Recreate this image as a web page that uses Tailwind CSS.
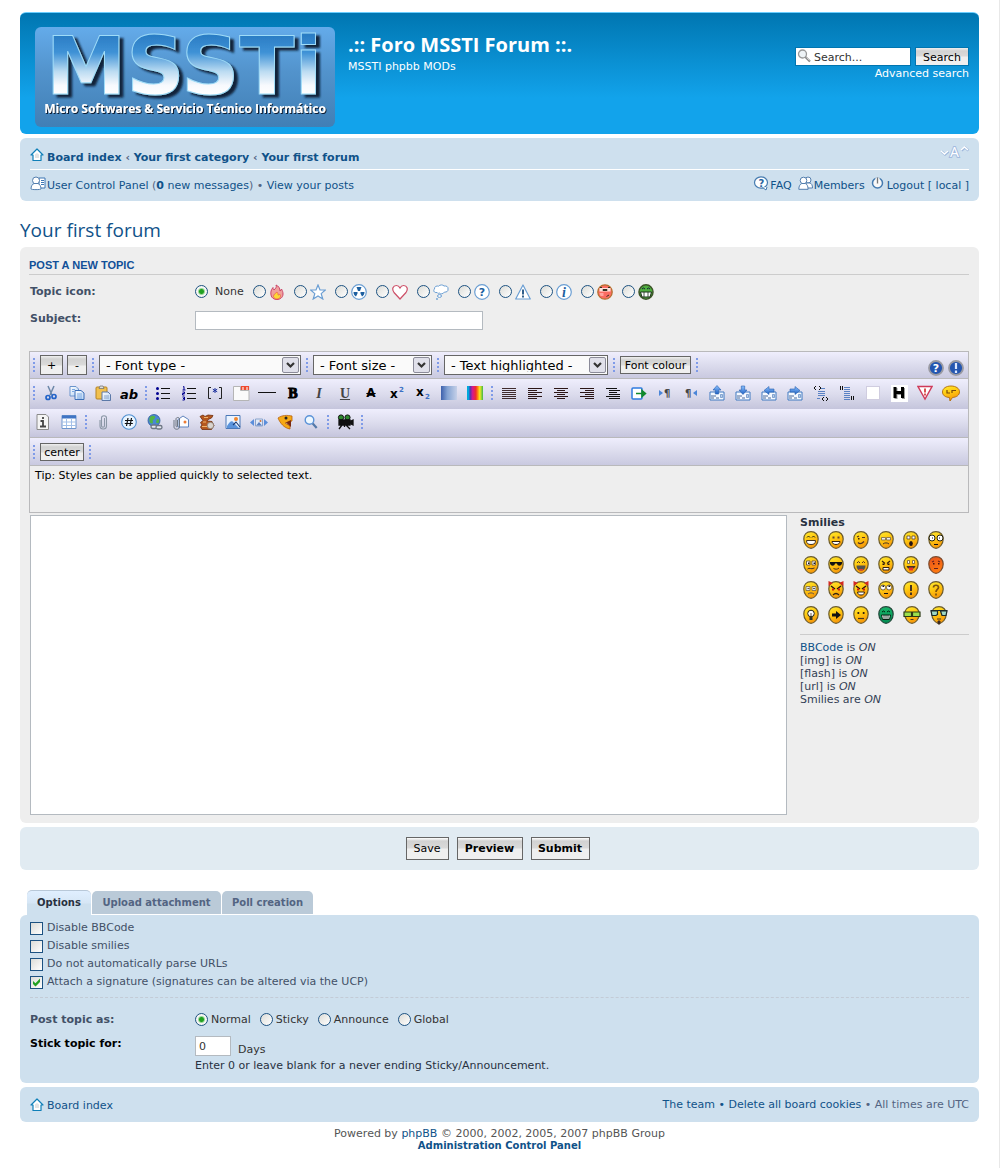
<!DOCTYPE html>
<html lang="en">
<head>
<meta charset="utf-8">
<title>Your first forum - Post a new topic</title>
<script src="https://cdn.jsdelivr.net/npm/@tailwindcss/browser@4"></script>
</head>
<body class="bg-white font-['Verdana','DejaVu_Sans',sans-serif] text-[11px] leading-[13px] text-[#536482]">

<svg class="absolute size-0" aria-hidden="true">
  <defs>
    <linearGradient id="gFace" x1="0" y1="0" x2=".4" y2="1"><stop offset="0" stop-color="#ffee33"/><stop offset=".5" stop-color="#ffc911"/><stop offset="1" stop-color="#f79a0a"/></linearGradient>
    <linearGradient id="gRed" x1="0" y1="0" x2=".4" y2="1"><stop offset="0" stop-color="#e8501c"/><stop offset="1" stop-color="#ff7a10"/></linearGradient>
    <linearGradient id="gGreen" x1="0" y1="0" x2="0" y2="1"><stop offset="0" stop-color="#19b56a"/><stop offset="1" stop-color="#008a50"/></linearGradient>
    <linearGradient id="gPage" x1="0" y1="0" x2="1" y2="1"><stop offset="0" stop-color="#fff"/><stop offset="1" stop-color="#b5d2f3"/></linearGradient>
    <linearGradient id="gBlue" x1="0" y1="0" x2="0" y2="1"><stop offset="0" stop-color="#8cc1ff"/><stop offset="1" stop-color="#1f62c4"/></linearGradient>
  </defs>
  <symbol id="face" viewBox="0 0 16 18"><path d="M8 .7c4.400 0 7.200 3 7.200 7.400 0 4.800-3.600 9.200-7.200 9.200S.8 12.900.8 8.100C.8 3.700 3.600.7 8 .7z" fill="url(#gFace)" stroke="#6b5a2c" stroke-width="1.200"/></symbol>
  <symbol id="home" viewBox="0 0 14 14"><path d="M7 1 1 7h2v5.500h8V7h2z" fill="#fff" stroke="#0f7fb8" stroke-width="1.200" stroke-linejoin="round"/><path d="M5 6.500 7 5l2 1.500V10H5z" fill="#e3e3e3"/></symbol>
  <symbol id="mover" viewBox="0 0 16 16"><path d="M1 7h14v8H1z" fill="#f5f9ff" stroke="#3f78c0"/><path d="M2 11h5M2 13h3M7 13h3" stroke="#4a6b9b"/><path d="M11.500 9.500h2v3h-2z" fill="#b7cdea" stroke="#4a78b8" stroke-width=".6"/></symbol>
</svg>

<div class="min-h-[1168px] border-r border-[#e8e8e8] px-5 pt-3 pb-4">

  <!-- Header -->
  <header class="flex items-start rounded-[6px] border-t border-[#6aceff] bg-[linear-gradient(#0076b1,#12a3eb_85px)] px-[10px] pt-[14px] pb-[6px] text-white">
    <a href="#" class="ml-[5px] shrink-0" aria-label="MSSTI home">
      <svg class="overflow-visible" width="300" height="101" viewBox="0 0 300 101">
        <defs>
          <linearGradient id="lgBg" x1="0" y1="0" x2="0" y2="1"><stop offset="0" stop-color="#64abea"/><stop offset=".45" stop-color="#5293cc"/><stop offset="1" stop-color="#417fb5"/></linearGradient>
          <linearGradient id="lgTx" gradientUnits="userSpaceOnUse" x1="0" y1="8" x2="0" y2="67"><stop offset="0" stop-color="#2a7cc4"/><stop offset=".3" stop-color="#3f92d6"/><stop offset=".62" stop-color="#bcdcf2"/><stop offset=".85" stop-color="#f7f9fd"/><stop offset="1" stop-color="#fff"/></linearGradient>
          <filter id="lgSh" x="-5%" y="-10%" width="112%" height="125%"><feDropShadow dx="4" dy="3" stdDeviation="1" flood-color="#0a1c30" flood-opacity=".95"/></filter>
          <filter id="lgSh2" x="-5%" y="-10%" width="112%" height="130%"><feDropShadow dx="1" dy="1" stdDeviation=".7" flood-color="#0a1c30"/></filter>
        </defs>
        <rect width="300" height="100" rx="6" fill="url(#lgBg)"/>
        <text x="149" y="67" text-anchor="middle" font-family="DejaVu Sans, sans-serif" font-weight="700" font-size="81" fill="url(#lgTx)" stroke="#9fdcf8" stroke-width="1" filter="url(#lgSh)">MSSTi</text>
        <text x="150" y="86" text-anchor="middle" font-family="Open Sans, sans-serif" font-weight="700" font-size="12" fill="#fff" filter="url(#lgSh2)">Micro Softwares &amp; Servicio Técnico Informático</text>
      </svg>
    </a>
    <div class="ml-[13px] pt-[7px]">
      <h1 class="font-['Trebuchet_MS','Open_Sans',sans-serif] text-[20px] leading-[22px] font-bold">.:: Foro MSSTI Forum ::.</h1>
      <p class="mt-1">MSSTI phpbb MODs</p>
    </div>
    <form class="ml-auto pt-[20px] text-right" onsubmit="return false">
      <div class="flex gap-[4px]">
        <div class="relative">
          <input type="text" value="Search..." aria-label="Search" class="block h-[19px] w-[116px] border border-[#0075b0] bg-white pt-px pl-[18px] text-[11px] text-[#333] outline-none">
          <svg class="absolute top-[2px] left-[2px]" width="14" height="14" viewBox="0 0 14 14"><circle cx="5.500" cy="5" r="4" fill="#eef3f6" stroke="#999" stroke-width="1.300"/><path d="M8.500 8 13 12.500" stroke="#888" stroke-width="2.200"/><path d="M9.500 8.500 12.500 11.500" stroke="#ddd" stroke-width=".8"/></svg>
        </div>
        <button class="h-[19px] w-[54px] border border-[#0075b0] bg-[linear-gradient(#efefef,#d2d2d2_3px,#d9d9d9_8px,#efefef_9px)] pt-px text-[11px] leading-[13px] text-black">Search</button>
      </div>
      <a href="#" class="block leading-[15px]">Advanced search</a>
    </form>
  </header>

  <!-- Breadcrumbs and user links -->
  <nav class="mt-1 rounded-[6px] bg-[#cee0ee] px-[10px] text-[#105289]">
    <div class="flex h-[32px] items-start border-b border-white pt-[13px]">
      <svg class="-mt-[3px] mr-[3px]" width="14" height="14"><use href="#home"/></svg>
      <p class="font-bold"><a href="#">Board index</a> <span class="text-[#536482]">‹</span> <a href="#">Your first category</a> <span class="text-[#536482]">‹</span> <a href="#">Your first forum</a></p>
      <a href="#" class="ml-auto -mt-[7px]" aria-label="Change font size">
        <svg class="overflow-visible" width="29" height="16" viewBox="0 0 29 16"><g fill="none" stroke="#9fb8dc" stroke-width="2.400"><path d="m1.500 7.500 3.500 3 3.500-3M21.500 6.500l3.500-3 3.500 3"/></g><g fill="none" stroke="#fff" stroke-width="1.400"><path d="m1 7 3.500 3L8 7M21 6l3.500-3L28 6"/></g><text x="10" y="13" font-family="Open Sans, sans-serif" font-size="14" fill="#fff" stroke="#a3bbdf" stroke-width="2" paint-order="stroke">A</text></svg>
      </a>
    </div>
    <div class="flex h-[31px] items-start pt-[9px]">
      <svg class="-mt-[3px] mr-px" width="16" height="15" viewBox="0 0 16 15"><path d="M9 2h6v10H9z" fill="#fff" stroke="#3d76b5"/><path d="M11 4.500h3M11 6.500h3M11 8.500h3" stroke="#3d76b5"/><circle cx="6" cy="4.500" r="3.500" fill="#fff" stroke="#547fae"/><path d="M1 13c0-3 1.500-5 3-5.500h4c1.500.5 3 2.500 3 5.500 0 .8-10 .8-10 0z" fill="#fff" stroke="#547fae"/></svg>
      <p><a href="#">User Control Panel</a> <span class="text-[#536482]">(</span><a href="#"><b>0</b> new messages</a><span class="text-[#536482]">) •</span> <a href="#">View your posts</a></p>
      <ul class="ml-auto flex gap-[6px]">
        <li class="flex"><svg class="-mt-[3px] mr-px" width="16" height="15" viewBox="0 0 16 15"><ellipse cx="8" cy="6.500" rx="6.500" ry="5.700" fill="#fff" stroke="#457bb0" stroke-width="1.200"/><path d="M9.500 11.500 13 14l1-3" fill="#fff" stroke="#457bb0"/><text x="5.500" y="10.500" font-family="DejaVu Sans, sans-serif" font-size="10" font-weight="700" fill="#2b659f">?</text></svg><a href="#">FAQ</a></li>
        <li class="flex"><svg class="-mt-[3px] mr-px" width="15" height="15" viewBox="0 0 15 15"><g fill="#fff" stroke="#547fae"><circle cx="10" cy="4" r="3"/><path d="M7 12c0-3 1-4.500 2-5h3c1.500.5 2.500 2 2.500 5z"/><circle cx="5.500" cy="4.500" r="3.300"/><path d="M.8 13.300c0-3.500 1.500-5.300 3-5.800h3.500c1.500.5 2.800 2.300 2.800 5.800z"/></g></svg><a href="#">Members</a></li>
        <li class="flex"><svg class="-mt-[3px] mr-[3px]" width="13" height="14" viewBox="0 0 13 14"><circle cx="6.500" cy="7" r="5" fill="#f8f8f8" stroke="#457bb0" stroke-width="1.500"/><path d="M6.500 1.500V7" stroke="#fff" stroke-width="4"/><path d="M6.500 1.500V7.500" stroke="#777" stroke-width="1.400"/></svg><a href="#">Logout [ local ]</a></li>
      </ul>
    </div>
  </nav>

  <h2 class="mt-[17px] font-['Trebuchet_MS','Open_Sans',sans-serif] text-[19px] leading-[24px] text-[#105289]">Your first forum</h2>

  <form onsubmit="return false">
  <!-- Message editor -->
  <section class="mt-[5px] rounded-[6px] bg-[#eee] px-[9px] pt-[12px] pb-[8px]">
    <h3 class="mr-px border-b border-[#ccc] pb-[2px] font-['Arial','Liberation_Sans',sans-serif] text-[11px] font-bold text-[#115098] uppercase">Post a new topic</h3>

    <div class="mt-[7px] flex h-[18px] items-center pl-px">
      <span class="w-[165px] font-bold text-[#425067]">Topic icon:</span>
      <div class="flex items-center gap-[8px] text-[#333] [&_input]:size-[13px] [&_input]:appearance-none [&_input]:rounded-full [&_input]:border [&_input]:border-[#1d5281] [&_input]:bg-[linear-gradient(135deg,#dcdcd7,#fff)] [&_input:checked]:bg-[radial-gradient(circle,#21a121_0_2px,#9bd79b_3px,#f6f6f4_4px)] [&_label]:flex [&_label]:items-center [&_label]:gap-[4px] [&_svg]:-ml-px [&_svg]:mt-[2px] [&_svg]:mr-px">
        <label class="min-w-[50px]"><input type="radio" name="icon" checked><span class="ml-[3px]">None</span></label>
        <label><input type="radio" name="icon" aria-label="Fire"><svg width="16" height="16" viewBox="0 0 16 16"><path d="M7 1c1 2-.5 3.500-2 5C4 5 4 4.500 4 3.500 2 6 1.500 8 2 11c.5 3 3 4.500 6 4.500s6-2 6-5.500c0-2-.5-3-1.500-5-.3 1-.7 1.500-1.500 2C11 4 9.500 2 7 1z" fill="#f0a09c" stroke="#cc4468"/><path d="M8 8c-1.500 1.500-3.500 2-3.500 4.500C5 14.500 6.500 15 8 15s3.500-1 3.500-3c0-1-.5-1.500-1-2-.5 1-1 1-1.500 1 0-1 0-2-1-3z" fill="#fdd835" stroke="#e8604a" stroke-width=".7"/></svg></label>
        <label><input type="radio" name="icon" aria-label="Star"><svg width="16" height="16" viewBox="0 0 16 16"><path d="m8 1 2 5h5.400l-4.200 3.600L12.800 15 8 12l-4.800 3 1.600-5.400L.6 6H6z" fill="#fff" stroke="#6a9ed3" stroke-width="1.200"/></svg></label>
        <label><input type="radio" name="icon" aria-label="Radioactive"><svg width="16" height="16" viewBox="0 0 16 16"><circle cx="8" cy="8" r="7.300" fill="#fff" stroke="#6a9ed3" stroke-width="1.200"/><path d="M5.500 3h5l-1.500 4H7zM2.500 8h4v1.500L5 12.500C3.500 12 2.500 10 2.500 8zM13.500 8h-4v1.500l1.500 3c1.500-.5 2.500-2.500 2.500-4.500z" fill="#1d5f9f"/></svg></label>
        <label><input type="radio" name="icon" aria-label="Heart"><svg width="16" height="16" viewBox="0 0 16 16"><path d="M8 15 2 8.500C-.5 5 1 1.500 4.300 1.500 6 1.500 7.500 3 8 4c.5-1 2-2.500 3.700-2.500C15 1.500 16.500 5 14 8.500z" fill="#fff" stroke="#cd5068" stroke-width="1.200"/></svg></label>
        <label><input type="radio" name="icon" aria-label="Thinking"><svg width="16" height="16" viewBox="0 0 16 16"><path d="M4 8.500C1 9 0 6.500 1.500 5 1 2.500 4 1.500 5.500 2.200 7 .5 10 .6 11 2c2.500-.5 4.500 1 4 3 .5 2-1.500 3.500-3.500 3C10.500 10 7 10.500 6.300 9 5.500 9.600 4.500 9.300 4 8.500z" fill="#fff" stroke="#6a9ed3"/><ellipse cx="6.500" cy="12" rx="2" ry="1.400" fill="#fff" stroke="#6a9ed3"/><circle cx="4" cy="15" r=".9" fill="#6a9ed3"/></svg></label>
        <label><input type="radio" name="icon" aria-label="Question"><svg width="16" height="16" viewBox="0 0 16 16"><circle cx="8" cy="8" r="7.300" fill="#fff" stroke="#6a9ed3" stroke-width="1.200"/><text x="8" y="12" text-anchor="middle" font-family="DejaVu Sans, sans-serif" font-weight="700" font-size="11" fill="#1d5f9f">?</text></svg></label>
        <label><input type="radio" name="icon" aria-label="Alert"><svg width="16" height="16" viewBox="0 0 16 16"><path d="M8 1 15.300 15H.7z" fill="#fff" stroke="#6a9ed3" stroke-width="1.200" stroke-linejoin="round"/><path d="M8 5.500v5M8 11.500v2" stroke="#1d4f7f" stroke-width="1.800"/></svg></label>
        <label><input type="radio" name="icon" aria-label="Info"><svg width="16" height="16" viewBox="0 0 16 16"><circle cx="8" cy="8" r="7.300" fill="#fff" stroke="#6a9ed3" stroke-width="1.200"/><text x="8" y="12.500" text-anchor="middle" font-family="Liberation Serif, serif" font-weight="700" font-style="italic" font-size="14" fill="#1d5f9f">i</text></svg></label>
        <label><input type="radio" name="icon" aria-label="Razz"><svg width="16" height="16" viewBox="0 0 16 16"><circle cx="8" cy="8" r="7.200" fill="#fb6c62" stroke="#b5702f" stroke-width="1.300"/><path d="M2.500 4h11v3.500h-11z" fill="#ffe2de"/><path d="M3 3.500h2M11 3.500h2M6 5.500h4v1H6zM9.500 12.500 12 11" stroke="#332" stroke-width="1" fill="#332"/><path d="M2.500 9h4v3h-3z" fill="#ffa5a0"/></svg></label>
        <label><input type="radio" name="icon" aria-label="Mr. Green"><svg width="16" height="16" viewBox="0 0 16 16"><ellipse cx="8" cy="8" rx="7" ry="7.200" fill="#4fae3f" stroke="#3c5428" stroke-width="1.500"/><path d="M4 5l1.500-1L7 5M9 5l1.500-1L12 5" stroke="#123" fill="none"/><path d="M2.500 8h11L12 13H4z" fill="#fff" stroke="#1d331a"/><path d="M6 8v5M10 8v5" stroke="#1d331a" stroke-width=".8"/></svg></label>
      </div>
    </div>

    <div class="mt-[11px] flex items-start pl-px">
      <label for="subject" class="w-[165px] pt-px font-bold text-[#425067]">Subject:</label>
      <input id="subject" type="text" class="h-[19px] w-[288px] border border-[#b4bac0] bg-white px-1 text-[#333] outline-none">
    </div>

    <!-- Formatting toolbars -->
    <div class="mt-[21px] mr-px border border-[#b9b9bb] text-black">
      <div class="flex h-[27px] items-center gap-[2px] border-b border-[#b9b9bb] bg-[linear-gradient(#efeefd,#dcdced_50%,#c9c9e0)]">
        <span class="mx-[3px] h-[14px] w-[2px] shrink-0 bg-[repeating-linear-gradient(#7f9be8_0_2px,transparent_2px_4px)]"></span>
        <button type="button" class="h-[20px] w-[23px] border border-[#666] bg-[linear-gradient(#efefef,#d2d2d2_3px,#dadada_9px,#efefef_10px)]">+</button>
        <button type="button" class="ml-[2px] h-[20px] w-[20px] border border-[#666] bg-[linear-gradient(#efefef,#d2d2d2_3px,#dadada_9px,#efefef_10px)]">-</button>
        <span class="mx-[3px] h-[14px] w-[2px] shrink-0 bg-[repeating-linear-gradient(#7f9be8_0_2px,transparent_2px_4px)]"></span>
        <div class="relative w-[202px]"><select aria-label="Font type" class="block h-[20px] w-full appearance-none border border-[#666] bg-[#fafafa] pl-[6px] text-[13px] outline-none"><option>- Font type -</option></select><svg class="pointer-events-none absolute top-[2px] right-[2px]" width="17" height="16" viewBox="0 0 17 16"><rect x=".5" y=".5" width="16" height="15" rx="1.500" fill="#e0e0ea" stroke="#8b8b99"/><path d="m5 6 3.500 3.500L12 6" fill="none" stroke="#333" stroke-width="2.200"/></svg></div>
        <span class="mx-[3px] h-[14px] w-[2px] shrink-0 bg-[repeating-linear-gradient(#7f9be8_0_2px,transparent_2px_4px)]"></span>
        <div class="relative w-[119px]"><select aria-label="Font size" class="block h-[20px] w-full appearance-none border border-[#666] bg-[#fafafa] pl-[6px] text-[13px] outline-none"><option>- Font size -</option></select><svg class="pointer-events-none absolute top-[2px] right-[2px]" width="17" height="16" viewBox="0 0 17 16"><rect x=".5" y=".5" width="16" height="15" rx="1.500" fill="#e0e0ea" stroke="#8b8b99"/><path d="m5 6 3.500 3.500L12 6" fill="none" stroke="#333" stroke-width="2.200"/></svg></div>
        <span class="mx-[3px] h-[14px] w-[2px] shrink-0 bg-[repeating-linear-gradient(#7f9be8_0_2px,transparent_2px_4px)]"></span>
        <div class="relative w-[164px]"><select aria-label="Text highlighted" class="block h-[20px] w-full appearance-none border border-[#666] bg-[#fafafa] pl-[6px] text-[13px] outline-none"><option>- Text highlighted -</option></select><svg class="pointer-events-none absolute top-[2px] right-[2px]" width="17" height="16" viewBox="0 0 17 16"><rect x=".5" y=".5" width="16" height="15" rx="1.500" fill="#e0e0ea" stroke="#8b8b99"/><path d="m5 6 3.500 3.500L12 6" fill="none" stroke="#333" stroke-width="2.200"/></svg></div>
        <span class="mx-[3px] h-[14px] w-[2px] shrink-0 bg-[repeating-linear-gradient(#7f9be8_0_2px,transparent_2px_4px)]"></span>
        <button type="button" class="h-[18px] w-[71px] border border-[#666] bg-[linear-gradient(#efefef,#d2d2d2_3px,#dadada_8px,#efefef_9px)] whitespace-nowrap">Font colour</button>
        <span class="mx-[3px] h-[14px] w-[2px] shrink-0 bg-[repeating-linear-gradient(#7f9be8_0_2px,transparent_2px_4px)]"></span>
        <div class="mr-[4px] ml-auto flex gap-[4px] pt-[5px]">
          <button type="button" aria-label="Help"><svg width="16" height="16" viewBox="0 0 16 16"><circle cx="8" cy="8" r="7" fill="#2456b0" stroke="#9a9aa2" stroke-width="1.800"/><text x="8" y="12" text-anchor="middle" font-family="DejaVu Sans, sans-serif" font-weight="700" font-size="11" fill="#fff">?</text></svg></button>
          <button type="button" aria-label="About"><svg width="16" height="16" viewBox="0 0 16 16"><circle cx="8" cy="8" r="7" fill="#2456b0" stroke="#9a9aa2" stroke-width="1.800"/><path d="M8 3v6M8 10.500v2.500" stroke="#dce8ff" stroke-width="2.200"/></svg></button>
        </div>
      </div>

      <div class="flex h-[30px] items-center bg-[linear-gradient(#efeefd,#dcdced_50%,#c5c5dc)] pb-[2px] [&>button]:grid [&>button]:h-full [&>button]:w-[26px] [&>button]:shrink-0 [&>button]:place-items-center">
        <span class="mx-[3px] h-[14px] w-[2px] shrink-0 bg-[repeating-linear-gradient(#7f9be8_0_2px,transparent_2px_4px)]"></span>
        <button type="button" aria-label="Cut"><svg width="16" height="16" viewBox="0 0 16 16"><path d="M5 1l4 9M11 1 7 10" stroke="#6c87a8" stroke-width="1.500"/><circle cx="5" cy="12.500" r="2" fill="none" stroke="#2464c8" stroke-width="1.700"/><circle cx="11" cy="11.500" r="2" fill="none" stroke="#2464c8" stroke-width="1.700"/></svg></button>
        <button type="button" aria-label="Copy"><svg width="16" height="16" viewBox="0 0 16 16"><path d="M1 1.500h6l2.500 2.500V11H1z" fill="url(#gPage)" stroke="#6a94cc"/><path d="M6 5.500h6L15 8v6.500H6z" fill="url(#gPage)" stroke="#3c6fb8"/><path d="M8 9h5M8 11h5M8 13h5M3 4.500h3M3 6.500h2" stroke="#6fa0e0" stroke-width=".9"/></svg></button>
        <button type="button" aria-label="Paste"><svg width="16" height="16" viewBox="0 0 16 16"><rect x="1" y="2" width="11" height="12" rx="1" fill="#f1c04e" stroke="#b58322"/><path d="M4 3.500h5L8 1H5z" fill="#ddd" stroke="#6b6b6b" stroke-width=".7"/><path d="M7 7h6l2.500 2.500v6H7z" fill="url(#gPage)" stroke="#5c79a8"/><path d="M9 11h5M9 13h5" stroke="#7a94bb" stroke-width=".8"/></svg></button>
        <button type="button" aria-label="Clear format"><svg width="18" height="16" viewBox="0 0 18 16"><text x="0" y="14" font-family="DejaVu Sans, sans-serif" font-weight="700" font-style="italic" font-size="13" fill="#000">ab</text></svg></button>
        <span class="mx-[3px] h-[14px] w-[2px] shrink-0 bg-[repeating-linear-gradient(#7f9be8_0_2px,transparent_2px_4px)]"></span>
        <button type="button" aria-label="Bulleted list"><svg width="16" height="16" viewBox="0 0 16 16"><path d="M6 3.500h9M6 8.500h9M6 13.500h9" stroke="#111"/><g fill="#000090"><circle cx="2.500" cy="3.500" r="1.500"/><circle cx="2.500" cy="8.500" r="1.500"/><circle cx="2.500" cy="13.500" r="1.500"/></g></svg></button>
        <button type="button" aria-label="Numbered list"><svg width="16" height="16" viewBox="0 0 16 16"><path d="M6 3.500h9M6 8.500h9M6 13.500h9" stroke="#111"/><path d="M2 2l1-.5V5M1.500 5h3M1.500 7h2v1.500h-2V10h2M1.500 12h2v3h-2M2 13.500h1.500" stroke="#000090" fill="none"/></svg></button>
        <button type="button" aria-label="List item"><svg width="16" height="16" viewBox="0 0 16 16"><path d="M4 2.500H1.500v11H4M12 2.500h2.500v11H12" stroke="#222" fill="none"/><path d="M8 3v5M5.800 4.200l4.400 2.600M10.200 4.200 5.800 6.800" stroke="#1b2f9c"/></svg></button>
        <button type="button" aria-label="Field set"><svg width="17" height="16" viewBox="0 0 17 16"><path d="M.5 1.500h7v4h8.500v10H.5z" fill="#fafafa" stroke="#b5b5b5"/><path d="M8.500 5V1.500h3V5M12.500 5V1.500h3V5" stroke="#ef4a30" stroke-width="1.200" fill="#f8b9aa"/></svg></button>
        <button type="button" aria-label="Horizontal line"><svg width="18" height="16" viewBox="0 0 18 16"><path d="M0 7.500h18" stroke="#111"/></svg></button>
        <button type="button" aria-label="Bold" class="font-['Liberation_Serif',serif] text-[14px] font-bold [-webkit-text-stroke:1px_#000]">B</button>
        <button type="button" aria-label="Italic" class="font-['Liberation_Serif',serif] text-[14px] font-bold text-[#444] italic">I</button>
        <button type="button" aria-label="Underline" class="font-['Liberation_Serif',serif] text-[14px] font-bold text-[#444] underline">U</button>
        <button type="button" aria-label="Strike" class="text-[12px] font-bold line-through">A</button>
        <button type="button" aria-label="Superscript"><svg width="16" height="16" viewBox="0 0 16 16"><text x="1" y="13" font-family="DejaVu Sans, sans-serif" font-weight="700" font-size="12">x</text><text x="10" y="7" font-family="DejaVu Sans, sans-serif" font-weight="700" font-size="7" fill="#3b6fc4">2</text></svg></button>
        <button type="button" aria-label="Subscript"><svg width="16" height="16" viewBox="0 0 16 16"><text x="1" y="11" font-family="DejaVu Sans, sans-serif" font-weight="700" font-size="12">x</text><text x="10" y="14" font-family="DejaVu Sans, sans-serif" font-weight="700" font-size="7" fill="#3b6fc4">2</text></svg></button>
        <button type="button" aria-label="Fade"><span class="h-[14px] w-[16px] bg-[linear-gradient(90deg,#3d60ac,#84a3d3_40%,#c5d0e8)]"></span></button>
        <button type="button" aria-label="Gradient"><span class="h-[14px] w-[16px] bg-[linear-gradient(90deg,#00a9dc_0_10%,#5633b0_20%,#d6188e_35%,#f02c2c_55%,#ff8a12_68%,#f4ee20_80%,#3fb54a)]"></span></button>
        <span class="mx-[3px] h-[14px] w-[2px] shrink-0 bg-[repeating-linear-gradient(#7f9be8_0_2px,transparent_2px_4px)]"></span>
        <button type="button" aria-label="Justify"><svg width="16" height="16" viewBox="0 0 16 16"><path d="M1 3.500h14M1 5.500h14M1 7.500h14M1 9.500h14M1 11.500h14M1 13.500h14" stroke="#2c1616" stroke-width=".9"/></svg></button>
        <button type="button" aria-label="Align left"><svg width="16" height="16" viewBox="0 0 16 16"><path d="M1 3.500h14M1 5.500h9M1 7.500h14M1 9.500h9M1 11.500h14M1 13.500h9" stroke="#2c1616"/></svg></button>
        <button type="button" aria-label="Align center"><svg width="16" height="16" viewBox="0 0 16 16"><path d="M1 3.500h14M4 5.500h8M1 7.500h14M4 9.500h8M1 11.500h14M4 13.500h8" stroke="#2c1616"/></svg></button>
        <button type="button" aria-label="Align right"><svg width="16" height="16" viewBox="0 0 16 16"><path d="M1 3.500h14M6 5.500h9M1 7.500h14M6 9.500h9M1 11.500h14M6 13.500h9" stroke="#2c1616"/></svg></button>
        <button type="button" aria-label="Preformatted"><svg width="16" height="16" viewBox="0 0 16 16"><path d="M1 3.500h11M4 5.500h11M4 7.500h8M4 9.500h11M1 11.500h14M4 13.500h11" stroke="#111"/></svg></button>
        <button type="button" aria-label="Indent"><svg width="16" height="16" viewBox="0 0 16 16"><rect x="1" y="3" width="10" height="11" rx="1" fill="#fff" stroke="#2f7be0" stroke-width="1.500"/><path d="M5 8.500h8M11 5.500l3.500 3-3.500 3z" stroke="#118a2c" stroke-width="1.500" fill="#118a2c"/></svg></button>
        <button type="button" aria-label="Left to right"><svg width="16" height="16" viewBox="0 0 16 16"><path d="M2 5v6l4-3z" fill="#4b86d8"/><text x="7" y="12" font-family="DejaVu Sans, sans-serif" font-weight="700" font-size="10" fill="#444">¶</text></svg></button>
        <button type="button" aria-label="Right to left"><svg width="16" height="16" viewBox="0 0 16 16"><path d="M14 5v6l-4-3z" fill="#4b86d8"/><text x="2" y="12" font-family="DejaVu Sans, sans-serif" font-weight="700" font-size="10" fill="#444">¶</text></svg></button>
        <button type="button" aria-label="Marquee up"><svg width="16" height="16"><use href="#mover"/><path d="M8 .5 12 5h-2.300v4H6.300V5H4z" fill="url(#gBlue)" stroke="#265fae" stroke-width=".6"/></svg></button>
        <button type="button" aria-label="Marquee down"><svg width="16" height="16"><use href="#mover"/><path d="M8 9.500 4 5h2.300V1h3.400v4H12z" fill="url(#gBlue)" stroke="#265fae" stroke-width=".6"/></svg></button>
        <button type="button" aria-label="Marquee left"><svg width="16" height="16"><use href="#mover"/><path d="M3 5.500 8 1.500V4h5v3H8v2.500z" fill="url(#gBlue)" stroke="#265fae" stroke-width=".6"/></svg></button>
        <button type="button" aria-label="Marquee right"><svg width="16" height="16"><use href="#mover"/><path d="M13 5.500 8 1.500V4H3v3h5v2.500z" fill="url(#gBlue)" stroke="#265fae" stroke-width=".6"/></svg></button>
        <button type="button" aria-label="Code"><svg width="16" height="16" viewBox="0 0 16 16"><path d="M3 1 1 3l2 2M6 1l2 2-2 2M11 12l-2 2 2 2M13 12l2 2-2 2" fill="none" stroke="#111"/><path d="M8 3.500h4M5 6.500h7M5 8.500h7M5 10.500h7M4 13.500h3" stroke="#5b82c4"/></svg></button>
        <button type="button" aria-label="Quote"><svg width="16" height="16" viewBox="0 0 16 16"><path d="M1.500 1v4M3.500 1v4M12.500 11v4M14.500 11v4" stroke="#111"/><path d="M5 2.500h6M5 4.500h6M5 6.500h6M5 8.500h6M5 10.500h6M5 12.500h6M5 14.500h6" stroke="#5b82c4"/></svg></button>
        <button type="button" aria-label="Spoiler"><span class="size-[14px] border border-[#d0cde0] bg-white"></span></button>
        <button type="button" aria-label="Hidden"><svg width="17" height="17" viewBox="0 0 17 17"><path d="M0 0h17v17H0z" fill="#fff"/><path d="M5 3v11M12.500 3v11M5 8.500h7" stroke="#999" stroke-width="3"/><path d="M4 2v11M11.500 2v11M4 7.500h7" stroke="#000" stroke-width="3"/></svg></button>
        <button type="button" aria-label="Moderator note"><svg width="16" height="16" viewBox="0 0 16 16"><path d="M1 1.500h14L8 14z" fill="#fff" stroke="#cf3a5a" stroke-width="1.400"/><path d="M8 3.500v4M8 8.500v2" stroke="#cf2a2a" stroke-width="1.600"/></svg></button>
        <button type="button" aria-label="Off topic"><svg width="18" height="17" viewBox="0 0 18 17"><path d="M9 1c5 0 8.500 2.500 8.500 5.800 0 3.400-3 5.400-7 5.700L8 16l-.5-3.500C3 12.300.5 10 .5 7 .5 3.500 4 1 9 1z" fill="url(#gFace)" stroke="#b06a0a" stroke-width=".9"/><path d="M5 5v3h3M10 8V5.500h4" stroke="#7a4a08" stroke-width="1.200" fill="none"/></svg></button>
      </div>

      <div class="flex h-[29px] items-center border-b border-[#b9b9bb] bg-[linear-gradient(#efeefd,#dcdced_50%,#c5c5dc)] pb-[2px] [&>button]:grid [&>button]:h-full [&>button]:w-[26px] [&>button]:shrink-0 [&>button]:place-items-center">
        <button type="button" aria-label="Style tip"><svg width="16" height="16" viewBox="0 0 16 16"><path d="M2 .5h9L13.500 3v12.500H2z" fill="#f4f4f4" stroke="#8a8a8a"/><path d="M8 3v2M5.500 7H8v5M5 12.500h6" stroke="#444" stroke-width="1.800" fill="none"/></svg></button>
        <button type="button" aria-label="Table"><svg width="16" height="16" viewBox="0 0 16 16"><path d="M1 1.500h14v13H1z" fill="#fff" stroke="#6f96cc"/><path d="M1 1.500h14v3H1z" fill="#3f74c4"/><path d="M1 8h14M1 11.500h14M5.500 4v10M10.500 4v10" stroke="#a3c0e8"/></svg></button>
        <span class="mx-[3px] h-[14px] w-[2px] shrink-0 bg-[repeating-linear-gradient(#7f9be8_0_2px,transparent_2px_4px)]"></span>
        <button type="button" aria-label="Attachment"><svg width="16" height="16" viewBox="0 0 16 16"><path d="M9.500 4v8c0 1.500-3 1.500-3 0V4c0-3 5-3 5 0v8c0 4-6.500 4-6.500 0V6" fill="none" stroke="#8b97a6" stroke-width="1.100"/></svg></button>
        <button type="button" aria-label="Anchor"><svg width="16" height="16" viewBox="0 0 16 16"><circle cx="8" cy="8" r="7.300" fill="#e9f4ff" stroke="#4f8fd0" stroke-width="1.100"/><path d="M7 4 5.500 12M10.500 4 9 12M4 6.500h8M3.800 9.500h8" stroke="#111" stroke-width="1.200"/></svg></button>
        <button type="button" aria-label="Link"><svg width="16" height="16" viewBox="0 0 16 16"><circle cx="7" cy="6.500" r="6" fill="#4a86d4" stroke="#2b5a9a" stroke-width=".8"/><path d="M3 3c2-2 4-1.500 5-.5S7 5 6 6s1 3-1 3.500S1.500 6 3 3zM10 5c2 0 2.500 1 2 3s-3 1-3 0z" fill="#52b545"/><g fill="#e4e7ee" stroke="#6d7683" stroke-width="1.300"><rect x="4" y="11" width="6" height="3.500" rx="1.700"/><rect x="9" y="11.500" width="6" height="3.500" rx="1.700"/></g></svg></button>
        <button type="button" aria-label="Email"><svg width="16" height="16" viewBox="0 0 16 16"><path d="M5 5.500 10 2l5.500 3.500V13H5z" fill="#fdfdff" stroke="#5f83bd"/><circle cx="12" cy="8" r="1.500" fill="#ee7b33"/><path d="M4.500 6v6c0 1-1.500 1-1.500 0V5c0-2 3.500-2 3.500 0v8c0 3-5.500 3-5.500 0V6" fill="none" stroke="#6d7683"/></svg></button>
        <button type="button" aria-label="eD2k"><svg width="16" height="16" viewBox="0 0 16 16"><path d="M1 2.500 4 1l2 1.500L9 1l5 .5L12.500 4 9 5.500 8 7l5 .5 2 4-2.500 4H3L1.500 13 3 11 1.500 8.500 4 6.500z" fill="#b5581f" stroke="#6e2d0c" stroke-width=".8"/><circle cx="11.500" cy="11.500" r="3.200" fill="#d9d4cf" stroke="#85796e" stroke-width=".8"/><path d="M4 8h3M3 12.500h5M5 3.500h4" stroke="#efb36a"/></svg></button>
        <button type="button" aria-label="Image"><svg width="16" height="16" viewBox="0 0 16 16"><path d="M1 1.500h14v13H1z" fill="#eaf3ff" stroke="#4a78b8"/><path d="M2 12c3-5 5-6 7-3l5 5H2z" fill="#5b94dc"/><circle cx="11" cy="5" r="2" fill="#f2862d"/><path d="m8 11 3-3 4 5" fill="none" stroke="#1e3e75" stroke-width="1.100"/></svg></button>
        <button type="button" aria-label="Thumbnail"><svg width="18" height="16" viewBox="0 0 18 16"><path d="M4 5v7L0 8.500zM14 5v7l4-3.500z" fill="#5a8edb"/><path d="M5.500 5h7v7h-7z" fill="#dfe9f8" stroke="#8aa4cc"/><path d="M7 10.500 9 8l3 3.500H6z" fill="#5b7fc0"/><circle cx="10.500" cy="7" r="1" fill="#d0703a"/></svg></button>
        <button type="button" aria-label="Imageshack"><svg width="16" height="16" viewBox="0 0 16 16"><path d="M1 4c4-3 9-3 14-2v5L8 9l5 3v3C7 14 3 9 1 4z" fill="#f5a915" stroke="#b8600b" stroke-width=".8"/><path d="M9 8.500 14 6v7z" fill="#7a2a10"/><circle cx="9" cy="4" r="1.500" fill="#222"/></svg></button>
        <button type="button" aria-label="Search tag"><svg width="16" height="16" viewBox="0 0 16 16"><circle cx="6.500" cy="6" r="4.300" fill="#eef8ff" stroke="#5b93d8" stroke-width="1.400"/><path d="m9.700 9.500 4 4.500" stroke="#5479a8" stroke-width="2.200"/></svg></button>
        <span class="mx-[3px] h-[14px] w-[2px] shrink-0 bg-[repeating-linear-gradient(#7f9be8_0_2px,transparent_2px_4px)]"></span>
        <button type="button" aria-label="Video"><svg width="17" height="16" viewBox="0 0 17 16"><circle cx="4" cy="3.500" r="2.600" fill="#2d8a2d" stroke="#111"/><circle cx="10.500" cy="3.500" r="2.600" fill="#2d8a2d" stroke="#111"/><path d="M2 6h11v1.500L16 6v5l-3-1.500V11H2zM5 11l-3 4M7.500 11v2M9 11l4 4" fill="#111" stroke="#111" stroke-width="1.300"/></svg></button>
        <span class="mx-[3px] h-[14px] w-[2px] shrink-0 bg-[repeating-linear-gradient(#7f9be8_0_2px,transparent_2px_4px)]"></span>
      </div>

      <div class="flex h-[28px] items-center gap-[2px] border-b border-[#b9b9bb] bg-[linear-gradient(#efeefd,#dcdced_50%,#c9c9e0)]">
        <span class="mx-[3px] h-[14px] w-[2px] shrink-0 bg-[repeating-linear-gradient(#7f9be8_0_2px,transparent_2px_4px)]"></span>
        <button type="button" class="h-[18px] w-[44px] border border-[#666] bg-[linear-gradient(#efefef,#d2d2d2_3px,#dadada_8px,#efefef_9px)] pt-px">center</button>
        <span class="mx-[3px] h-[14px] w-[2px] shrink-0 bg-[repeating-linear-gradient(#7f9be8_0_2px,transparent_2px_4px)]"></span>
      </div>
      <p class="h-[46px] px-[5px] pt-[3px]">Tip: Styles can be applied quickly to selected text.</p>
    </div>

    <div class="mt-[2px] flex items-start gap-[13px] pr-px pl-px">
      <textarea aria-label="Message" class="block h-[300px] min-w-0 flex-1 resize-none border border-[#b4bac0] bg-white p-1 outline-none"></textarea>
      <aside class="w-[169px] text-[#333f55]">
        <h4 class="pt-px font-bold text-[#28313f]">Smilies</h4>
        <div class="-mt-[2px] grid w-[150px] grid-cols-6 [&>button]:grid [&>button]:h-[25px] [&>button]:w-[22px] [&>button]:place-items-center [&_svg]:overflow-visible">
          <button type="button" aria-label="Very happy"><svg width="16" height="18"><use href="#face"/><path d="M4 6.500 5.500 5 7 6.500M9 6.500 10.500 5 12 6.500" fill="none" stroke="#221"/><path d="M3.500 9.500h9c0 3-1.500 4-4.500 4s-4.500-1-4.500-4z" fill="#fff" stroke="#432"/></svg></button>
          <button type="button" aria-label="Smile"><svg width="16" height="18"><use href="#face"/><path d="M4.500 5.500h2v2h-2zM9.500 5.500h2v2h-2z" fill="#643"/><path d="M4 10.500h8c0 2-2 3-4 3s-4-1-4-3z" fill="#fff" stroke="#321"/></svg></button>
          <button type="button" aria-label="Wink"><svg width="16" height="18"><use href="#face"/><path d="M4 6l2-1M9 6.500h3M5 11.500c2 2 4 1 6-1" fill="none" stroke="#532" stroke-width="1.200"/><path d="M5 7h1.500v1.500H5z" fill="#321"/></svg></button>
          <button type="button" aria-label="Sad"><svg width="16" height="18"><use href="#face"/><path d="M3.500 6.500h4v2.500h-4zM8.500 6.500h4v2.500h-4z" fill="#eee" stroke="#764" stroke-width=".8"/><path d="M5 13c1.500-1.500 4.500-1.500 6 0" fill="none" stroke="#432"/></svg></button>
          <button type="button" aria-label="Surprised"><svg width="16" height="18"><use href="#face"/><path d="M4 5h3v3H4zM9 5h3v3H9z" fill="#fff" stroke="#543" stroke-width=".8"/><ellipse cx="8" cy="12.500" rx="1.800" ry="2.500" fill="#211"/></svg></button>
          <button type="button" aria-label="Shocked"><svg width="16" height="18"><use href="#face"/><g fill="#fff" stroke="#221"><circle cx="4" cy="7" r="3"/><circle cx="12" cy="7" r="3"/></g><path d="M4 6.500h1v1H4zM11 6.500h1v1h-1zM6 13h4v1H6z" fill="#111"/></svg></button>
          <button type="button" aria-label="Confused"><svg width="16" height="18"><use href="#face"/><path d="M3.500 5h3.500v4H3.500zM9 5h3.500v4H9z" fill="#fff" stroke="#543" stroke-width=".8"/><path d="M5 6.500h1.500V8H5zM10.500 6.500H12V8h-1.500z" fill="#111"/><path d="M4.500 13c2-2 3 1 7-1" fill="none" stroke="#432"/></svg></button>
          <button type="button" aria-label="Cool"><svg width="16" height="18"><use href="#face"/><path d="M2 6h12v1.500c-1 3-4.500 3-5 0H7c-.5 3-4 3-5 0z" fill="#111"/><path d="M5.500 12.500c2 1 4 1 5.500-.5" fill="none" stroke="#432"/></svg></button>
          <button type="button" aria-label="Laughing"><svg width="16" height="18"><use href="#face"/><path d="M4 7 5.500 5.500 7 7M9 7l1.500-1.500L12 7" fill="none" stroke="#532"/><path d="M3.500 9.500h9c0 3.500-1.500 5-4.500 5s-4.500-1.500-4.500-5z" fill="#54514d"/><path d="M6 13h4v1.500H6z" fill="#e23b2e"/></svg></button>
          <button type="button" aria-label="Mad"><svg width="16" height="18"><use href="#face"/><path d="M4 5l3 2.500M12 5 9 7.500" stroke="#321" stroke-width="1.200"/><path d="M4.500 7.500h2V9h-2zM9.500 7.500h2V9h-2z" fill="#211"/><path d="M5 11.500h6V14H5z" fill="#fff" stroke="#321"/></svg></button>
          <button type="button" aria-label="Razz"><svg width="16" height="18"><use href="#face"/><path d="M4.500 4.500h2v3h-2zM9.500 4.500h2v3h-2z" fill="#fff" stroke="#543" stroke-width=".7"/><path d="M3.500 10h9c-.5 2-2 3-4.500 3s-4-1-4.500-3z" fill="#432"/><path d="M6 11.500h4v3H6z" fill="#e8322a"/></svg></button>
          <button type="button" aria-label="Embarrassed"><svg width="16" height="18"><path d="M8 .7c4.400 0 7.200 3 7.200 7.400 0 4.800-3.600 9.200-7.200 9.200S.8 12.900.8 8.100C.8 3.700 3.600.7 8 .7z" fill="url(#gRed)" stroke="#7b4a2c" stroke-width="1.200"/><path d="M4 6l2-1M10 5l2 1M6 12.500h4" stroke="#622" stroke-width="1.100"/><path d="M5 7h1.500v1.500H5zM10 7h1.500v1.500H10z" fill="#411"/></svg></button>
          <button type="button" aria-label="Crying"><svg width="16" height="18"><use href="#face"/><path d="M3 5.500h4v4H3zM9 5.500h4v4H9z" fill="#dce6ee" stroke="#764" stroke-width=".8"/><path d="M4.500 7.500h2M10 7.500h2M5 13c2-1.500 4-1.500 6 0" fill="none" stroke="#654"/></svg></button>
          <button type="button" aria-label="Evil"><svg width="16" height="18"><use href="#face"/><path d="M.5 0l4.500 2-4.500 3zM15.500 0 11 2l4.500 3z" fill="#d42a1e"/><path d="M3 5l4 3M13 5 9 8" stroke="#211" stroke-width="1.300"/><path d="M4 7.500h2v2H4zM10 7.500h2v2h-2z" fill="#d41a10"/><path d="M5 14c2-2 4-2 6 0" fill="none" stroke="#321" stroke-width="1.200"/></svg></button>
          <button type="button" aria-label="Twisted evil"><svg width="16" height="18"><use href="#face"/><path d="M.5 0l4.500 2-4.500 3zM15.500 0 11 2l4.500 3z" fill="#d42a1e"/><path d="M3 5l4 3M13 5 9 8" stroke="#211" stroke-width="1.300"/><path d="M4 7.500h2v2H4zM10 7.500h2v2h-2z" fill="#d41a10"/><path d="M4.500 11h7c-.5 2.500-1.500 3-3.500 3s-3-.5-3.500-3z" fill="#fff" stroke="#321"/></svg></button>
          <button type="button" aria-label="Rolling eyes"><svg width="16" height="18"><use href="#face"/><g fill="#fff" stroke="#543" stroke-width=".8"><circle cx="5" cy="6.500" r="2.500"/><circle cx="11" cy="6.500" r="2.500"/></g><path d="M4.500 4.500H6V6H4.500zM10.500 4.500H12V6h-1.500zM6 12h4v1H6z" fill="#111"/></svg></button>
          <button type="button" aria-label="Exclamation"><svg width="16" height="18"><use href="#face"/><path d="M8 4v6M8 11.500V14" stroke="#432" stroke-width="2"/></svg></button>
          <button type="button" aria-label="Question"><svg width="16" height="18"><use href="#face"/><path d="M5.500 6.500c0-3 5-3 5 0 0 2-2.500 2-2.500 4.500M8 12.500v2" fill="none" stroke="#7a5210" stroke-width="1.700"/></svg></button>
          <button type="button" aria-label="Idea"><svg width="16" height="18"><use href="#face"/><circle cx="8" cy="7.500" r="3.300" fill="#fff" stroke="#221"/><path d="M6.500 10.500h3V14h-3z" fill="#332"/><path d="M8 7v3" stroke="#654"/></svg></button>
          <button type="button" aria-label="Arrow"><svg width="16" height="18"><use href="#face"/><path d="M4 7.500h4V5l5 4-5 4v-2.500H4z" fill="#111"/></svg></button>
          <button type="button" aria-label="Neutral"><svg width="16" height="18"><use href="#face"/><path d="M4.500 6h1.700v2H4.500zM9.800 6h1.700v2H9.800z" fill="#321"/><path d="M5 12.500h6" stroke="#432" stroke-width="1.200"/></svg></button>
          <button type="button" aria-label="Mr. Green"><svg width="16" height="18"><path d="M8 .7c4.400 0 7.200 3 7.200 7.400 0 4.800-3.600 9.200-7.200 9.200S.8 12.900.8 8.100C.8 3.700 3.600.7 8 .7z" fill="url(#gGreen)" stroke="#24463a" stroke-width="1.200"/><path d="M4 6 5.500 5 7 6M9 6l1.500-1L12 6" fill="none" stroke="#021"/><path d="M3.500 9h9l-1 4.500h-7z" fill="#fff" stroke="#021"/><path d="M6 9v4.500M8 9v4.500M10 9v4.500" stroke="#021" stroke-width=".8"/></svg></button>
          <button type="button" aria-label="Geek" class="pl-[2px]"><svg width="16" height="18"><use href="#face"/><path d="M0 6h7.500v4.500H0zM8.500 6H16v4.500H8.500z" fill="#9be04c" stroke="#2c3a14" stroke-width="1.200"/><path d="M6.500 13.500h3" stroke="#432"/></svg></button>
          <button type="button" aria-label="Ultra geek" class="pl-[6px]"><svg width="16" height="18"><use href="#face"/><path d="M-.5 4.500H16.500M0 5h6.500v3.500L5 9.500H1zM9.500 5H16l-1 4.500h-4z" fill="#9fd8c4" stroke="#1c2a2a" stroke-width="1.200"/><path d="M6 13h4M7 15h2v3H7z" stroke="#432" fill="#322"/></svg></button>
        </div>
        <hr class="mt-[7px] mb-[6px] border-[#ccc]">
        <p><a href="#" class="text-[#105289]">BBCode</a> is <em>ON</em></p>
        <p>[img] is <em>ON</em></p>
        <p>[flash] is <em>ON</em></p>
        <p>[url] is <em>ON</em></p>
        <p>Smilies are <em>ON</em></p>
      </aside>
    </div>
  </section>

  <!-- Form actions -->
  <section class="mt-1 flex h-[43px] items-center justify-center gap-[8px] rounded-[6px] bg-[#e1ebf2] pr-1 text-black [&>button]:h-[23px] [&>button]:border [&>button]:border-[#666] [&>button]:bg-[linear-gradient(#fff,#d2d2d2_3px,#d9d9d9_10px,#efefef_11px)]">
    <button type="button" class="w-[43px]">Save</button>
    <button type="button" class="w-[66px] font-bold">Preview</button>
    <button type="submit" class="w-[59px] font-bold">Submit</button>
  </section>

  <!-- Option tabs -->
  <div class="mt-[20px] ml-[7px] flex items-start gap-px text-[10px] leading-[12px] font-bold">
    <a href="#" class="h-[25px] w-[64px] rounded-t-[5px] border-t border-[#b8c8d8] bg-[linear-gradient(#e0efff,#d6e6f5_12px,#cee0ee_13px)] pt-[6px] text-center text-[#28313f]">Options</a>
    <a href="#" class="mt-px h-[23px] w-[129px] rounded-t-[5px] bg-[#bacad8] pt-[6px] text-center">Upload attachment</a>
    <a href="#" class="mt-px h-[23px] w-[91px] rounded-t-[5px] bg-[#bacad8] pt-[6px] text-center">Poll creation</a>
  </div>
  <section class="rounded-[6px] bg-[#cee0ee] px-[10px] pt-[4px] pb-[11px]">
    <div class="text-[#425067] [&_input]:col-start-1 [&_input]:row-start-1 [&_input]:mt-px [&_input]:size-[13px] [&_input]:appearance-none [&_input]:border [&_input]:border-[#1d5281] [&_input]:bg-[linear-gradient(135deg,#dcdcd7,#fff)] [&_label]:grid [&_label]:h-[18px] [&_label]:grid-cols-[17px_1fr] [&_label]:items-center [&_span]:-mt-[2px]">
      <label><input type="checkbox"><span>Disable BBCode</span></label>
      <label><input type="checkbox"><span>Disable smilies</span></label>
      <label><input type="checkbox"><span>Do not automatically parse URLs</span></label>
      <label><input type="checkbox" checked><svg class="pointer-events-none z-10 col-start-1 row-start-1 mt-px" width="13" height="13" viewBox="0 0 13 13"><path d="M3 5v3l2.500 2.500L10 6V2.500L5.500 7.200z" fill="#21a121"/></svg><span>Attach a signature (signatures can be altered via the UCP)</span></label>
    </div>
    <hr class="mt-[6px] border-dashed border-[#c3cbd6]">
    <div class="mt-[15px] flex h-[13px] items-center">
      <span class="w-[165px] font-bold text-[#425067]">Post topic as:</span>
      <div class="flex gap-[9px] text-[#333] [&_input]:size-[13px] [&_input]:appearance-none [&_input]:rounded-full [&_input]:border [&_input]:border-[#1d5281] [&_input]:bg-[linear-gradient(135deg,#dcdcd7,#fff)] [&_input:checked]:bg-[radial-gradient(circle,#21a121_0_2px,#9bd79b_3px,#f6f6f4_4px)] [&_label]:flex [&_label]:items-center [&_label]:gap-[3px]">
        <label><input type="radio" name="type" checked>Normal</label>
        <label><input type="radio" name="type">Sticky</label>
        <label><input type="radio" name="type">Announce</label>
        <label><input type="radio" name="type">Global</label>
      </div>
    </div>
    <div class="mt-[10px] flex items-start">
      <label for="days" class="w-[165px] pt-px font-bold text-black">Stick topic for:</label>
      <div class="text-[#333]">
        <div class="flex items-end gap-[7px]"><input id="days" type="text" value="0" class="h-[20px] w-[36px] border border-[#b4bac0] bg-white px-[3px] outline-none"><span>Days</span></div>
        <p class="mt-[3px] text-[#28313f]">Enter 0 or leave blank for a never ending Sticky/Announcement.</p>
      </div>
    </div>
  </section>
  </form>

  <!-- Footer -->
  <nav class="mt-1 flex h-[35px] items-center rounded-[6px] bg-[#cee0ee] px-[10px] text-[#105289]">
    <svg class="mr-[3px]" width="14" height="14"><use href="#home"/></svg>
    <a href="#" class="mt-[2px]">Board index</a>
    <p class="ml-auto"><a href="#">The team</a> • <a href="#">Delete all board cookies</a> <span class="text-[#536482]">• All times are UTC</span></p>
  </nav>
  <footer class="pt-[6px] text-center leading-[12px] text-[#555]">
    <p>Powered by <a href="#" class="text-[#105289]">phpBB</a> © 2000, 2002, 2005, 2007 phpBB Group</p>
    <p class="text-[10px]"><a href="#" class="font-bold text-[#105289]">Administration Control Panel</a></p>
  </footer>
</div>
</body>
</html>
